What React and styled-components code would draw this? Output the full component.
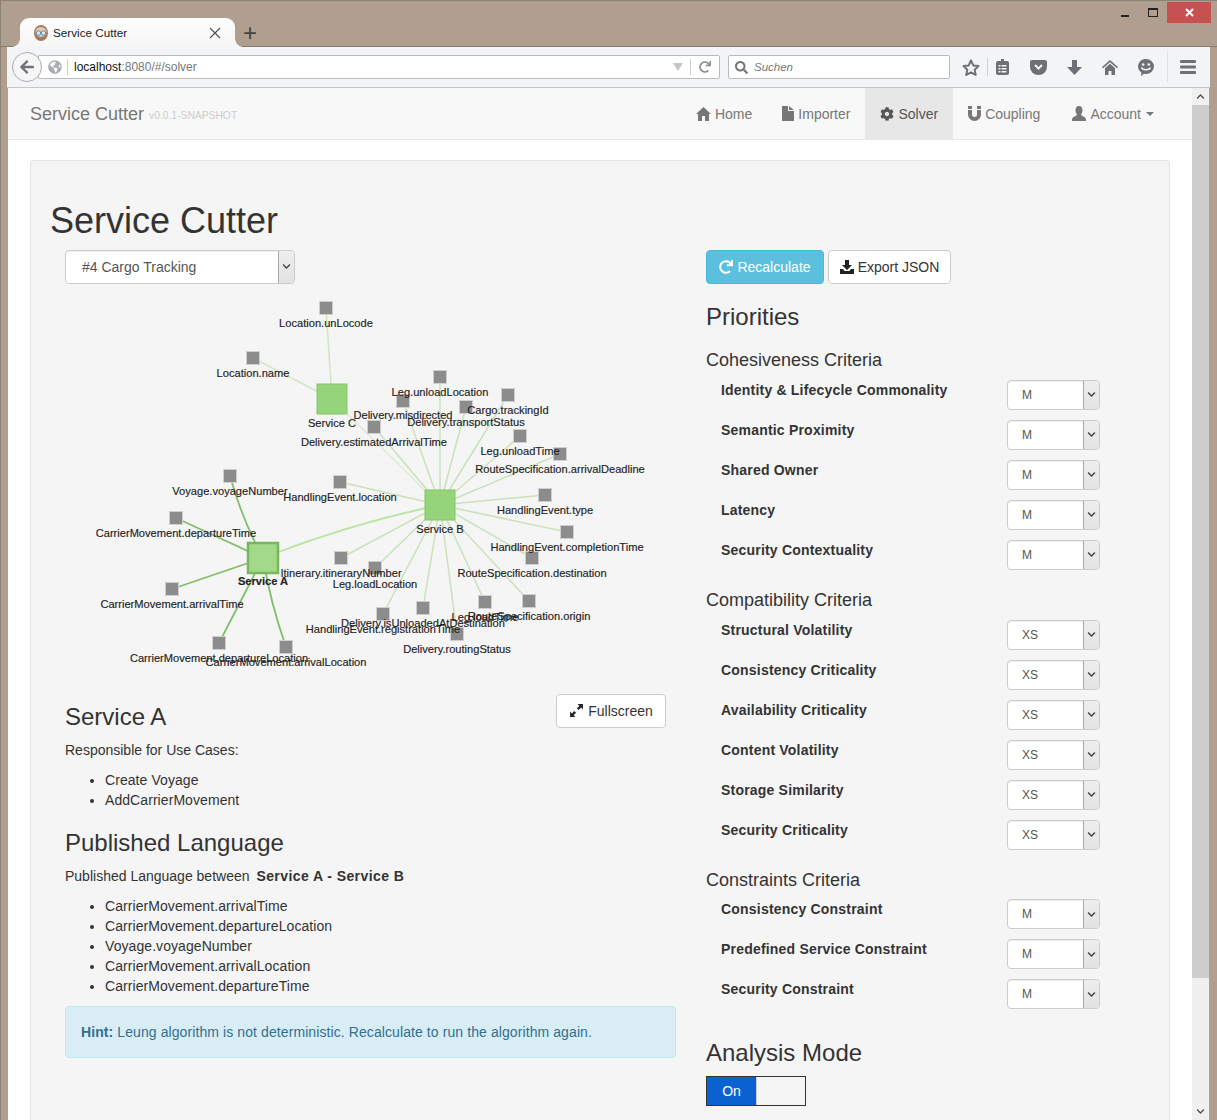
import React from "react";
import styled, { createGlobalStyle } from "styled-components";
import {
  FaArrowLeft, FaCog, FaGlobeAmericas, FaRedo, FaSearch, FaChevronDown, FaChevronUp,
} from "react-icons/fa";

const GlobalStyle = createGlobalStyle`
  html, body {
    margin: 0;
    height: 1120px;
    overflow: hidden;
    background: #b09f8e;
  }
  * { box-sizing: border-box; }
  body {
    font-family: "Liberation Sans", Arial, sans-serif;
    font-size: 14px;
    line-height: 20px;
    color: #333;
  }
`;

// browser frame

const Window = styled.div`
  width: 1217px;
  height: 1120px;
  overflow: hidden;
  display: flex;
  flex-direction: column;
  background: #b09f8e;
  border-top: 1px solid #8b8378;
  border-left: 1px solid #8b8378;
`;

const TitleBar = styled.div`
  height: 46px;
  flex: none;
  display: flex;
  justify-content: space-between;
  align-items: flex-start;
  padding: 0 6px 0 19px;
  border-bottom: 1px solid #857b70;
`;

const TabRow = styled.div`
  display: flex;
  align-items: center;
  padding-top: 17px;
`;

const Tab = styled.div`
  position: relative;
  width: 215px;
  height: 29px;
  background: linear-gradient(#fdfdfd, #f6f6f6);
  border-radius: 9px 9px 0 0;
  display: flex;
  align-items: center;
  padding: 0 14px 0 13px;
  gap: 4px;
  font-size: 11.7px;
  color: #222;
  &::before, &::after {
    content: "";
    position: absolute;
    bottom: 0;
    width: 8px;
    height: 8px;
  }
  &::before {
    left: -8px;
    background: radial-gradient(circle at 0 0, transparent 7.5px, #f6f6f6 8px);
  }
  &::after {
    right: -8px;
    background: radial-gradient(circle at 100% 0, transparent 7.5px, #f6f6f6 8px);
  }
`;

const TabTitle = styled.span`
  flex: 1;
`;

const NewTab = styled.span`
  width: 30px;
  text-align: center;
  font-size: 24px;
  font-weight: 400;
  color: #444;
`;

const WindowControls = styled.div`
  display: flex;
  align-items: center;
  height: 21px;
  margin-top: 1px;
`;

const WindowButton = styled.div`
  width: ${(p) => p.$w}px;
  height: 21px;
  display: flex;
  align-items: center;
  justify-content: center;
  background: ${(p) => p.$bg || "transparent"};
`;

const MinGlyph = styled.span`
  width: 8px;
  height: 2px;
  margin-top: 6px;
  background: #222;
`;

const MaxGlyph = styled.span`
  width: 10px;
  height: 9px;
  border: 1px solid #222;
  border-top-width: 2px;
`;

const Toolbar = styled.div`
  height: 41px;
  flex: none;
  margin: 0 7px 0 6px;
  background: #f3f4f5;
  border-bottom: 1px solid #c5c5c5;
  display: flex;
  align-items: center;
  padding: 0 0 0 5px;
`;

const BackButton = styled.div`
  width: 30px;
  height: 30px;
  border-radius: 50%;
  background: #f6f6f6;
  border: 1px solid #a9adb1;
  display: flex;
  align-items: center;
  justify-content: center;
  color: #6f7479;
  font-size: 16px;
  position: relative;
  z-index: 1;
  flex: none;
`;

const UrlBar = styled.div`
  width: 682px;
  height: 24px;
  margin-left: -4px;
  background: #fff;
  border: 1px solid #b8bcc0;
  border-radius: 0 2px 2px 0;
  display: flex;
  align-items: center;
  padding-left: 9px;
  color: #8b9096;
  flex: none;
`;

const UrlDivider = styled.span`
  width: 1px;
  height: 16px;
  margin: 0 5px;
  background: #cdd0d3;
`;

const UrlText = styled.span`
  flex: 1;
  font-size: 12px;
  color: #777;
  padding-left: 1px;
`;

const UrlHost = styled.span`
  color: #111;
`;

const DropMark = styled.span`
  width: 0;
  height: 0;
  margin-right: 2px;
  border-left: 5px solid transparent;
  border-right: 5px solid transparent;
  border-top: 8px solid #c3c7cb;
`;

const SearchBar = styled.div`
  width: 222px;
  height: 24px;
  margin-left: 8px;
  background: #fff;
  border: 1px solid #b8bcc0;
  border-radius: 2px;
  display: flex;
  align-items: center;
  gap: 6px;
  padding-left: 6px;
  color: #777;
  font-size: 11.5px;
  font-style: italic;
  flex: none;
`;

const ToolIcons = styled.div`
  flex: 1;
  display: flex;
  align-items: center;
  padding-left: 8px;
`;

const ToolSlot = styled.span`
  width: ${(p) => p.$w || 36}px;
  display: flex;
  justify-content: center;
  flex: none;
`;

const ToolDivider = styled.span`
  width: 1px;
  height: 18px;
  margin: 0 -4px 0 3px;
  flex: none;
  background: #cfd2d5;
`;

const ToolGap = styled.span`
  width: 1px;
  height: 30px;
  margin: 0 2px 0 3px;
  flex: none;
  background: #e0e1e3;
`;

const Viewport = styled.div`
  flex: 1;
  min-height: 0;
  margin: 0 8px 0 7px;
  display: flex;
`;

const Page = styled.div`
  flex: 1;
  min-width: 0;
  background: #fff;
  display: flex;
  flex-direction: column;
`;

const Scrollbar = styled.div`
  width: 17px;
  flex: none;
  background: #f0f0f0;
  display: flex;
  flex-direction: column;
  align-items: center;
  color: #555;
  font-size: 9px;
`;

const ScrollEnd = styled.div`
  height: 17px;
  display: flex;
  align-items: center;
`;

const ScrollThumb = styled.div`
  width: 100%;
  height: 873px;
  background: #cdcdcd;
`;

const ScrollRest = styled.div`
  flex: 1;
`;

// site navbar

const Navbar = styled.nav`
  height: 52px;
  flex: none;
  background: #f8f8f8;
  border-bottom: 1px solid #e7e7e7;
  display: flex;
  align-items: stretch;
  justify-content: space-between;
  padding: 0 23px 0 22px;
`;

const Brand = styled.div`
  display: flex;
  align-items: center;
  gap: 5px;
  font-size: 18px;
  color: #777;
`;

const Version = styled.small`
  font-size: 10.3px;
  color: #ccc;
  margin-top: 4px;
`;

const NavList = styled.div`
  display: flex;
`;

const NavItem = styled.div`
  display: flex;
  align-items: center;
  gap: 4px;
  padding: 0 15px 0 ${(p) => p.$left || 15}px;
  color: ${(p) => (p.$active ? "#555" : "#777")};
  background: ${(p) => (p.$active ? "#e7e7e7" : "transparent")};
  svg { flex: none; }
`;

const Caret = styled.span`
  width: 0;
  height: 0;
  margin-left: 1px;
  border-left: 4px solid transparent;
  border-right: 4px solid transparent;
  border-top: 4px solid #777;
`;

// page content

const Content = styled.div`
  padding: 20px 22px 0;
  flex: 1;
  min-height: 0;
`;

const Well = styled.div`
  background: #f5f5f5;
  border: 1px solid #e3e3e3;
  border-radius: 4px;
  padding: 19px 19px 60px;
`;

const Title = styled.h1`
  margin: 21px 0 9px;
  font-size: 36px;
  font-weight: 500;
  line-height: 39.6px;
`;

const Row = styled.div`
  display: flex;
`;

const LeftCol = styled.div`
  width: 641px;
  flex: none;
  padding: 0 15px;
`;

const RightCol = styled.div`
  flex: 1;
  padding: 0 15px;
`;

const SelectBox = styled.div`
  width: ${(p) => p.$w}px;
  height: ${(p) => p.$h}px;
  flex: none;
  display: flex;
  background: #fff;
  border: 1px solid #ccc;
  border-radius: 4px;
  overflow: hidden;
  box-shadow: inset 0 1px 1px rgba(0, 0, 0, 0.075);
  color: #555;
  font-size: ${(p) => p.$fs}px;
  align-items: stretch;
`;

const SelectValue = styled.span`
  flex: 1;
  display: flex;
  align-items: center;
  padding-left: ${(p) => p.$pad}px;
`;

const SelectArrow = styled.span`
  width: 16px;
  background: linear-gradient(#eee, #e2e2e2);
  border-left: 1px solid #a8a8a8;
  display: flex;
  align-items: center;
  justify-content: center;
  font-size: 9px;
  color: #444;
`;

const GraphBox = styled.div`
  height: 410px;
`;

const ServiceHead = styled.div`
  display: flex;
  justify-content: space-between;
  align-items: flex-start;
  padding-right: 10px;
`;

const H3 = styled.h3`
  margin: ${(p) => p.$top || 20}px 0 ${(p) => p.$bottom || 10}px;
  font-size: 24px;
  font-weight: 500;
  line-height: 26.4px;
`;

const Text = styled.p`
  margin: 0 0 10px;
  strong {
    margin-left: 3px;
    letter-spacing: 0.42px;
  }
`;

const List = styled.ul`
  margin: 0 0 10px;
  padding-left: 40px;
  letter-spacing: 0.07px;
`;

const Button = styled.button`
  width: ${(p) => p.$w}px;
  height: 34px;
  display: inline-flex;
  align-items: center;
  justify-content: center;
  gap: 4px;
  padding: 0;
  font: inherit;
  color: ${(p) => (p.$info ? "#fff" : "#333")};
  background: ${(p) => (p.$info ? "#5bc0de" : "#fff")};
  border: 1px solid ${(p) => (p.$info ? "#46b8da" : "#ccc")};
  border-radius: 4px;
`;

const Hint = styled.div`
  margin-top: 10px;
  height: 52px;
  padding: 15px;
  background: #d9edf7;
  border: 1px solid #bce8f1;
  border-radius: 4px;
  color: #31708f;
  letter-spacing: 0.09px;
`;

const ButtonRow = styled.div`
  display: flex;
  gap: 4px;
`;

const H4 = styled.h4`
  margin: 21px 0 9px;
  font-size: 18px;
  font-weight: 500;
  line-height: 19.8px;
`;

const CriteriaList = styled.div`
  display: flex;
  flex-direction: column;
  gap: 10px;
`;

const CriteriaRow = styled.div`
  display: flex;
  justify-content: space-between;
  width: 394px;
`;

const CriteriaLabel = styled.span`
  font-weight: 700;
  letter-spacing: 0.2px;
  padding-left: 15px;
`;

const Toggle = styled.div`
  width: 100px;
  height: 30px;
  display: flex;
  border: 1px solid #333;
`;

const ToggleOn = styled.span`
  width: 49px;
  background: #0a62d0;
  color: #fff;
  display: flex;
  align-items: center;
  justify-content: center;
`;

const ToggleOff = styled.span`
  flex: 1;
  background: #f5f5f5;
  border-left: 1px solid #ccc;
`;

const GraphLabel = styled.text`
  font-family: "Liberation Sans", Arial, sans-serif;
  font-size: 11.1px;
  font-weight: ${(p) => (p.$bold ? 700 : 400)};
  fill: #222;
  stroke: #222;
  stroke-width: 0.15px;
  text-anchor: middle;
  dominant-baseline: central;
`;

// data

const serviceA = { x: 263, y: 558 };
const serviceB = { x: 440, y: 505 };
const serviceC = { x: 332, y: 399 };

const nodes = [
  { name: "Location.unLocode", x: 326, y: 308, s: serviceC },
  { name: "Location.name", x: 253, y: 358, s: serviceC },
  { name: "Leg.unloadLocation", x: 440, y: 377, s: serviceB },
  { name: "Delivery.misdirected", x: 403, y: 401, s: serviceB, dy: 14 },
  { name: "Cargo.trackingId", x: 508, y: 395, s: serviceB },
  { name: "Delivery.transportStatus", x: 466, y: 407, s: serviceB },
  { name: "Delivery.estimatedArrivalTime", x: 374, y: 427, s: serviceB },
  { name: "Leg.unloadTime", x: 520, y: 436, s: serviceB },
  { name: "RouteSpecification.arrivalDeadline", x: 560, y: 454, s: serviceB },
  { name: "HandlingEvent.location", x: 340, y: 482, s: serviceB },
  { name: "HandlingEvent.type", x: 545, y: 495, s: serviceB },
  { name: "HandlingEvent.completionTime", x: 567, y: 532, s: serviceB },
  { name: "RouteSpecification.destination", x: 532, y: 558, s: serviceB },
  { name: "Itinerary.itineraryNumber", x: 341, y: 558, s: serviceB },
  { name: "Leg.loadLocation", x: 375, y: 568, s: serviceB, dy: 16 },
  { name: "RouteSpecification.origin", x: 529, y: 601, s: serviceB },
  { name: "Leg.loadTime", x: 485, y: 602, s: serviceB },
  { name: "Delivery.isUnloadedAtDestination", x: 423, y: 608, s: serviceB },
  { name: "HandlingEvent.registrationTime", x: 383, y: 614, s: serviceB },
  { name: "Delivery.routingStatus", x: 457, y: 634, s: serviceB },
  { name: "Voyage.voyageNumber", x: 230, y: 476, s: serviceA, bend: 5 },
  { name: "CarrierMovement.departureTime", x: 176, y: 518, s: serviceA },
  { name: "CarrierMovement.arrivalTime", x: 172, y: 589, s: serviceA },
  { name: "CarrierMovement.departureLocation", x: 219, y: 643, s: serviceA },
  { name: "CarrierMovement.arrivalLocation", x: 286, y: 647, s: serviceA, bend: -4 },
];

const services = [
  { name: "Service C", ...serviceC },
  { name: "Service B", ...serviceB },
  { name: "Service A", ...serviceA, selected: true },
];

const cohesiveness = ["Identity & Lifecycle Commonality", "Semantic Proximity", "Shared Owner", "Latency", "Security Contextuality"];
const compatibility = ["Structural Volatility", "Consistency Criticality", "Availability Criticality", "Content Volatility", "Storage Similarity", "Security Criticality"];
const constraints = ["Consistency Constraint", "Predefined Service Constraint", "Security Constraint"];
const useCases = ["Create Voyage", "AddCarrierMovement"];
const published = [
  "CarrierMovement.arrivalTime",
  "CarrierMovement.departureLocation",
  "Voyage.voyageNumber",
  "CarrierMovement.arrivalLocation",
  "CarrierMovement.departureTime",
];

const curve = (a, b, bend = 0) => {
  const mx = (a.x + b.x) / 2;
  const my = (a.y + b.y) / 2;
  const dx = b.x - a.x;
  const dy = b.y - a.y;
  const len = Math.hypot(dx, dy) || 1;
  return `M${a.x} ${a.y} Q${mx + (-dy / len) * bend} ${my + (dx / len) * bend} ${b.x} ${b.y}`;
};

const edgeStyle = (s) => {
  if (s === serviceA) return { stroke: "#82bf69", strokeWidth: 1.8 };
  if (s === serviceB) return { stroke: "#c9e2ba", strokeWidth: 1.5 };
  return { stroke: "#cfe6c3", strokeWidth: 1.5 };
};

const Graph = () => (
  <svg width="611" height="410" viewBox="65 284 611 410" style={{ display: "block" }}>
    <path d={curve(serviceA, serviceB, -8)} fill="none" stroke="#b9e5a2" strokeWidth="2" />
    <path d={curve(serviceC, serviceB)} fill="none" stroke="#dcefd2" strokeWidth="1.6" />
    {nodes.map((n) => (
      <path key={n.name} d={curve(n, n.s, n.bend)} fill="none" {...edgeStyle(n.s)} />
    ))}
    {nodes.map((n) => (
      <rect key={n.name} x={n.x - 6.5} y={n.y - 6.5} width="13" height="13" fill="#8c8c8c" stroke="#cfcfcf" />
    ))}
    {services.map((s) => (
      <rect
        key={s.name}
        x={s.x - 15}
        y={s.y - 15}
        width="30"
        height="30"
        fill={s.selected ? "#a3d98b" : "#95d478"}
        stroke={s.selected ? "#77b85c" : "#86c66c"}
        strokeWidth={s.selected ? 2.5 : 1}
      />
    ))}
    {nodes.map((n) => (
      <GraphLabel key={n.name} x={n.x} y={n.y + (n.dy || 15)}>{n.name}</GraphLabel>
    ))}
    {services.map((s) => (
      <GraphLabel key={s.name} x={s.x} y={s.y + (s.selected ? 23 : 24)} $bold={s.selected}>{s.name}</GraphLabel>
    ))}
  </svg>
);

// hand drawn icons

const Favicon = () => (
  <svg width="16" height="18" viewBox="0 0 16 18">
    <ellipse cx="8" cy="9" rx="7" ry="8" fill="#a5795a" />
    <ellipse cx="8" cy="8" rx="5.5" ry="5" fill="#e3c9b3" />
    <circle cx="5.5" cy="9" r="2.2" fill="#dfeaf3" stroke="#5b8fb8" />
    <circle cx="10.5" cy="9" r="2.2" fill="#dfeaf3" stroke="#5b8fb8" />
  </svg>
);

const TabClose = () => (
  <svg width="12" height="12" viewBox="0 0 12 12">
    <path d="M1 1 L11 11 M11 1 L1 11" stroke="#555" strokeWidth="1.2" />
  </svg>
);

const CloseGlyph = () => (
  <svg width="9" height="9" viewBox="0 0 9 9">
    <path d="M1 1 L8 8 M8 1 L1 8" stroke="#fff" strokeWidth="2" />
  </svg>
);

const NavHome = () => (
  <svg width="15" height="14" viewBox="0 0 15 14" fill="#777">
    <path d="M7.500 0 L15 7 H13 V14 H9 V9 H6 V14 H2 V7 H0 Z" />
  </svg>
);

const NavFile = () => (
  <svg width="12" height="15" viewBox="0 0 12 15" fill="#777">
    <path d="M0 0h6v5h6v10H0zM7 0l5 4H7z" />
  </svg>
);

const NavUser = () => (
  <svg width="14" height="15" viewBox="0 0 14 15" fill="#777">
    <path d="M7 0C9.500 0 10.500 2 10.500 4.500C10.500 6.500 9.500 7.500 9 8.500C9 10 14 10.500 14 13.500V15H0V13.500C0 10.500 5 10 5 8.500C4.500 7.500 3.500 6.500 3.500 4.500C3.500 2 4.500 0 7 0Z" />
  </svg>
);

const Magnet = () => (
  <svg width="13" height="15" viewBox="0 0 13 15" fill="#777">
    <path d="M0 0h4v3H0zM9 0h4v3H9zM0 4h4v4.500a2.500 2.500 0 0 0 5 0V4h4v4.500a6.500 6.500 0 0 1-13 0z" />
  </svg>
);

const SaveIcon = () => (
  <svg width="14" height="14" viewBox="0 0 14 14" fill="#222">
    <path d="M5 0h4v5h3L7 10 2 5h3z" />
    <path d="M0 9h3l1.500 2h5L11 9h3v5H0z" />
  </svg>
);

const ResizeIcon = () => (
  <svg width="15" height="15" viewBox="0 0 14 14" fill="#222">
    <path d="M8 1h5v5l-1.700-1.700-2.300 2.300-1.600-1.600 2.300-2.300z" />
    <path d="M6 13H1V8l1.700 1.700L5 7.400 6.600 9 4.300 11.300z" />
  </svg>
);

const StarIcon = () => (
  <svg width="18" height="17" viewBox="0 0 18 17">
    <path d="M9 1.500l2.300 4.900 5.200.7-3.800 3.600 1 5.200L9 13.300l-4.700 2.600 1-5.200L1.500 7.100l5.200-.7z" fill="none" stroke="#6d7176" strokeWidth="2" strokeLinejoin="round" />
  </svg>
);

const ClipboardIcon = () => (
  <svg width="15" height="16" viewBox="0 0 15 16" fill="#6d7176">
    <path d="M6 0h3v2h3a2 2 0 0 1 2 2v10a2 2 0 0 1-2 2H3a2 2 0 0 1-2-2V4a2 2 0 0 1 2-2h3zM3.500 6v1.500h2V6zM6.500 6v1.500h5V6zM3.500 9v1.500h2V9zM6.500 9v1.500h5V9zM3.500 12v1.500h2V12zM6.500 12v1.500h5V12z" fillRule="evenodd" />
  </svg>
);

const PocketIcon = () => (
  <svg width="17" height="15" viewBox="0 0 17 15" fill="#6d7176">
    <path d="M2 0h13a2 2 0 0 1 2 2v5a8.500 8 0 0 1-17 0V2a2 2 0 0 1 2-2z" />
    <path d="M5 5l3.500 3.500L12 5" fill="none" stroke="#f3f4f5" strokeWidth="2" />
  </svg>
);

const DownIcon = () => (
  <svg width="15" height="15" viewBox="0 0 15 15" fill="#6d7176">
    <path d="M5 0h5v7h5l-7.500 8L0 7h5z" />
  </svg>
);

const ToolHomeIcon = () => (
  <svg width="16" height="15" viewBox="0 0 16 15" fill="#6d7176">
    <path d="M8 0l8 7-1 1.200L8 2.200 1 8.200 0 7z" />
    <path d="M8 3.800l5 4.300V15H9.500v-4h-3v4H3V8.100z" />
  </svg>
);

const SmileBubbleIcon = () => (
  <svg width="16" height="17" viewBox="0 0 16 17">
    <path d="M8 0a8 7.500 0 0 1 0 15c-.6 0-1.200 0-1.800-.2L3 17l.4-3.300A7.500 7.500 0 0 1 8 0z" fill="#6d7176" />
    <circle cx="5.200" cy="5.500" r="1.300" fill="#f3f4f5" />
    <circle cx="10.800" cy="5.500" r="1.300" fill="#f3f4f5" />
    <path d="M3.500 8.500c1 3 8 3 9 0" fill="none" stroke="#f3f4f5" strokeWidth="1.500" />
  </svg>
);

const BarsIcon = () => (
  <svg width="16" height="14" viewBox="0 0 16 14" fill="#6d7176">
    <rect width="16" height="3" rx="1" />
    <rect y="5.500" width="16" height="3" rx="1" />
    <rect y="11" width="16" height="3" rx="1" />
  </svg>
);

const Criteria = ({ items, value }) => (
  <CriteriaList>
    {items.map((label) => (
      <CriteriaRow key={label}>
        <CriteriaLabel>{label}</CriteriaLabel>
        <SelectBox $w={93} $h={30} $fs={12}>
          <SelectValue $pad={14}>{value}</SelectValue>
          <SelectArrow><FaChevronDown /></SelectArrow>
        </SelectBox>
      </CriteriaRow>
    ))}
  </CriteriaList>
);

const App = () => (
  <Window>
    <GlobalStyle />
    <TitleBar>
      <TabRow>
        <Tab>
          <Favicon />
          <TabTitle>Service Cutter</TabTitle>
          <TabClose />
        </Tab>
        <NewTab>+</NewTab>
      </TabRow>
      <WindowControls>
        <WindowButton $w={28}><MinGlyph /></WindowButton>
        <WindowButton $w={28}><MaxGlyph /></WindowButton>
        <WindowButton $w={44} $bg="#c75050"><CloseGlyph /></WindowButton>
      </WindowControls>
    </TitleBar>

    <Toolbar>
      <BackButton><FaArrowLeft /></BackButton>
      <UrlBar>
        <FaGlobeAmericas size={14} color="#a9adb1" />
        <UrlDivider />
        <UrlText><UrlHost>localhost</UrlHost>:8080/#/solver</UrlText>
        <DropMark />
        <UrlDivider />
        <FaRedo size={12} style={{ marginRight: 8, marginLeft: 3 }} />
      </UrlBar>
      <SearchBar>
        <FaSearch size={13} />
        Suchen
      </SearchBar>
      <ToolIcons>
        <ToolSlot $w={26}><StarIcon /></ToolSlot>
        <ToolDivider />
        <ToolSlot><ClipboardIcon /></ToolSlot>
        <ToolSlot><PocketIcon /></ToolSlot>
        <ToolSlot><DownIcon /></ToolSlot>
        <ToolSlot><ToolHomeIcon /></ToolSlot>
        <ToolSlot><SmileBubbleIcon /></ToolSlot>
        <ToolGap />
        <ToolSlot><BarsIcon /></ToolSlot>
      </ToolIcons>
    </Toolbar>

    <Viewport>
      <Page>
        <Navbar>
          <Brand>
            Service Cutter
            <Version>v0.0.1-SNAPSHOT</Version>
          </Brand>
          <NavList>
            <NavItem><NavHome />Home</NavItem>
            <NavItem><NavFile />Importer</NavItem>
            <NavItem $active><FaCog size={14} />Solver</NavItem>
            <NavItem><Magnet />Coupling</NavItem>
            <NavItem $left={17}><NavUser />Account <Caret /></NavItem>
          </NavList>
        </Navbar>
        <Content>
          <Well>
            <Title>Service Cutter</Title>
            <Row>
              <LeftCol>
                <SelectBox $w={230} $h={34} $fs={14}>
                  <SelectValue $pad={16}>#4 Cargo Tracking</SelectValue>
                  <SelectArrow><FaChevronDown /></SelectArrow>
                </SelectBox>
                <GraphBox><Graph /></GraphBox>
                <ServiceHead>
                  <H3 $top={10}>Service A</H3>
                  <Button $w={110}><ResizeIcon />Fullscreen</Button>
                </ServiceHead>
                <Text>Responsible for Use Cases:</Text>
                <List>
                  {useCases.map((u) => <li key={u}>{u}</li>)}
                </List>
                <H3>Published Language</H3>
                <Text>Published Language between <strong>Service A - Service B</strong></Text>
                <List>
                  {published.map((u) => <li key={u}>{u}</li>)}
                </List>
                <Hint><strong>Hint:</strong> Leung algorithm is not deterministic. Recalculate to run the algorithm again.</Hint>
              </LeftCol>
              <RightCol>
                <ButtonRow>
                  <Button $info $w={118}><FaRedo size={14} />Recalculate</Button>
                  <Button $w={123}><SaveIcon />Export JSON</Button>
                </ButtonRow>
                <H3>Priorities</H3>
                <H4>Cohesiveness Criteria</H4>
                <Criteria items={cohesiveness} value="M" />
                <H4>Compatibility Criteria</H4>
                <Criteria items={compatibility} value="XS" />
                <H4>Constraints Criteria</H4>
                <Criteria items={constraints} value="M" />
                <H3 $top={31} $bottom={9}>Analysis Mode</H3>
                <Toggle>
                  <ToggleOn>On</ToggleOn>
                  <ToggleOff />
                </Toggle>
              </RightCol>
            </Row>
          </Well>
        </Content>
      </Page>
      <Scrollbar>
        <ScrollEnd><FaChevronUp /></ScrollEnd>
        <ScrollThumb />
        <ScrollRest />
        <ScrollEnd><FaChevronDown /></ScrollEnd>
      </Scrollbar>
    </Viewport>
  </Window>
);

export default App;
